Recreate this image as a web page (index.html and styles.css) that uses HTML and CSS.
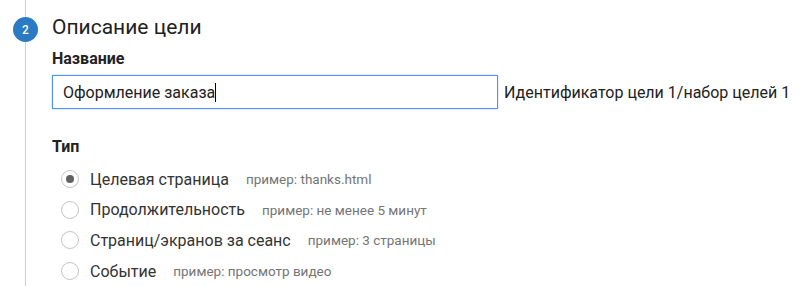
FILE: index.html
```html
<!DOCTYPE html>
<html lang="ru">
<head>
  <meta charset="UTF-8" />
  <title>Описание цели</title>
  <link rel="stylesheet" href="styles.css">
</head>
<body>
  <div class="step">
    <div class="step-rail">
      <span class="step-num">2</span>
    </div>

    <div class="step-body">
      <h2 class="step-title">Описание цели</h2>

      <div class="field-label">Название</div>
      <div class="name-row">
        <div class="text-input">Оформление заказа<span class="caret"></span></div>
        <span class="goal-id">Идентификатор цели 1/набор целей 1</span>
      </div>

      <div class="field-label type-label">Тип</div>
      <ul class="radio-list">
        <li class="radio-row">
          <span class="radio checked"></span>
          <span class="radio-text">Целевая страница</span>
          <span class="hint">пример: thanks.html</span>
        </li>
        <li class="radio-row">
          <span class="radio"></span>
          <span class="radio-text">Продолжительность</span>
          <span class="hint">пример: не менее 5 минут</span>
        </li>
        <li class="radio-row">
          <span class="radio"></span>
          <span class="radio-text">Страниц/экранов за сеанс</span>
          <span class="hint">пример: 3 страницы</span>
        </li>
        <li class="radio-row">
          <span class="radio"></span>
          <span class="radio-text">Событие</span>
          <span class="hint">пример: просмотр видео</span>
        </li>
      </ul>
    </div>
  </div>
</body>
</html>
```

FILE: styles.css
```css
:root {
  --blue: #2a7ac4;
  --focus: #4d90fe;
  --rail: #cfcfcf;
  --text: #222;
  --muted: #757575;
}
* { margin: 0; padding: 0; box-sizing: border-box; }
body {
  font-family: Roboto, "Noto Sans", sans-serif;
  background: #fff;
  color: var(--text);
  width: 800px;
  height: 286px;
  overflow: hidden;
}
.step {
  display: flex;
  height: 286px;
}
.step-rail {
  width: 52px;
  flex-shrink: 0;
  padding-top: 17px;
  background: linear-gradient(var(--rail), var(--rail)) no-repeat 25px 0 / 1px 100%;
}
.step-num {
  display: flex;
  align-items: center;
  justify-content: center;
  width: 25px;
  height: 25px;
  margin-left: 13px;
  border-radius: 50%;
  background: var(--blue);
  color: #fff;
  font-size: 12px;
  font-weight: 500;
}
.step-body {
  flex: 1;
  padding-top: 15px;
}
.step-title {
  font-size: 21px;
  font-weight: 400;
  line-height: 25px;
  color: #212121;
}
.field-label {
  font-size: 16px;
  font-weight: 700;
  line-height: 19px;
  margin-top: 9px;
  color: #222;
}
.name-row {
  display: flex;
  align-items: center;
  gap: 6px;
  margin-top: 7px;
}
.text-input {
  display: flex;
  align-items: center;
  width: 446px;
  height: 34px;
  padding-left: 10px;
  border: 1px solid var(--focus);
  box-shadow: 0 0 2px rgba(77, 144, 254, 0.4);
  font-size: 16px;
  color: #222;
}
.caret {
  display: inline-block;
  width: 1px;
  height: 19px;
  background: #000;
}
.goal-id {
  font-size: 16px;
  color: #222;
}
.type-label {
  margin-top: 28px;
}
.radio-list {
  list-style: none;
  margin-top: 8px;
  padding-left: 9px;
}
.radio-row {
  display: flex;
  align-items: center;
  height: 30.6px;
}
.radio {
  width: 18px;
  height: 18px;
  border: 1.5px solid #c4c4c4;
  border-radius: 50%;
  display: flex;
  align-items: center;
  justify-content: center;
  flex-shrink: 0;
}
.radio.checked::after {
  content: "";
  width: 8px;
  height: 8px;
  border-radius: 50%;
  background: #616161;
}
.radio-text {
  margin-left: 11px;
  font-size: 16px;
  color: #333;
}
.hint {
  margin-left: 17px;
  font-size: 13.5px;
  color: var(--muted);
}
```
